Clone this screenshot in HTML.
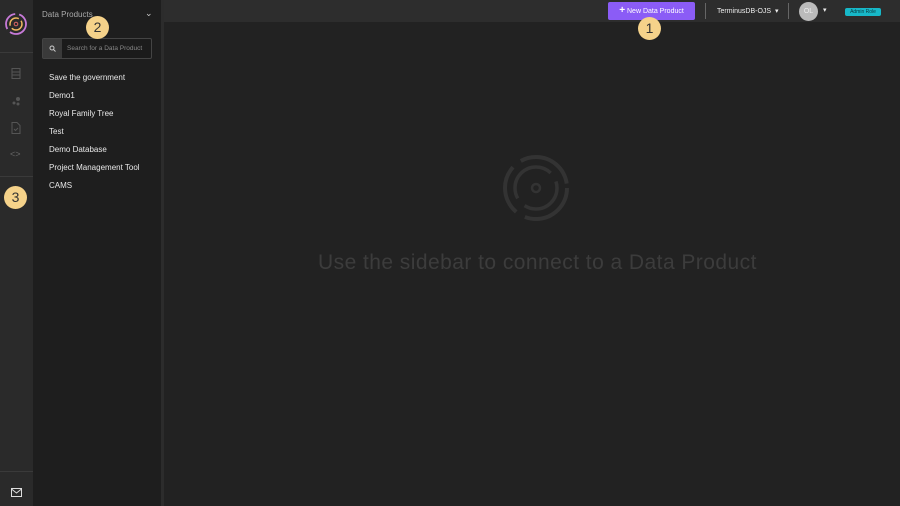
<!DOCTYPE html>
<html><head><style>
*{margin:0;padding:0;box-sizing:border-box}
body{width:900px;height:506px;background:#222;font-family:"Liberation Sans",sans-serif;position:relative;overflow:hidden}
.abs{position:absolute}
.badge{position:absolute;width:23px;height:23px;border-radius:50%;background:#f5d28a;color:#333;font-size:14px;text-align:center;line-height:23px}
.item{position:absolute;left:49px;color:#e8e8e8;font-size:8px}
</style></head><body>
<div class="abs" style="left:0;top:0;width:33px;height:506px;background:#2a2a2a"></div>
<div class="abs" style="left:0;top:52px;width:33px;height:1px;background:#3a3a3a"></div>
<div class="abs" style="left:0;top:176px;width:33px;height:1px;background:#3a3a3a"></div>
<div class="abs" style="left:0;top:471px;width:33px;height:1px;background:#3a3a3a"></div>
<svg class="abs" style="left:4px;top:12px" width="24" height="24" viewBox="0 0 24 24"><circle cx="12" cy="12" r="10" fill="none" stroke="#c77ad8" stroke-width="1.8" stroke-dasharray="22 4 20 4"/><circle cx="12" cy="12" r="6" fill="none" stroke="#f0b860" stroke-width="1.5" stroke-dasharray="14 3"/><circle cx="12" cy="12" r="1.8" fill="none" stroke="#d66" stroke-width="1"/></svg>
<svg class="abs" style="left:11px;top:68px" width="10" height="11"><rect x="1" y="0.5" width="8" height="10" fill="none" stroke="#555"/><path d="M1 4h8M1 7h8" stroke="#555"/></svg>
<svg class="abs" style="left:11px;top:96px" width="10" height="10"><circle cx="7" cy="3" r="2" fill="#555"/><circle cx="3" cy="7" r="1.5" fill="#555"/><circle cx="7" cy="8" r="1.5" fill="#555"/></svg>
<svg class="abs" style="left:11px;top:122px" width="10" height="12"><path d="M1 0.5h5l3 3v8H1z" fill="none" stroke="#555"/><path d="M3 7l1.5 1.5L7 6" stroke="#555" fill="none"/></svg>
<div class="abs" style="left:10px;top:149px;color:#666;font-size:9px">&lt;&gt;</div>
<svg class="abs" style="left:11px;top:488px" width="11" height="9"><rect x="0.5" y="0.5" width="10" height="8" fill="none" stroke="#ddd"/><path d="M0.5 1l5 4 5-4" stroke="#ddd" fill="none"/></svg>
<div class="abs" style="left:33px;top:0;width:128px;height:506px;background:#1e1e1e"></div>
<div class="abs" style="left:161px;top:0;width:3px;height:506px;background:#2c2c2c"></div>
<div class="abs" style="left:42px;top:10px;color:#aaa;font-size:8px">Data Products</div>
<div class="abs" style="left:145px;top:8px;color:#ccc;font-size:9px">⌄</div>
<div class="abs" style="left:42px;top:38px;width:110px;height:21px;border:1px solid #444;border-radius:2px;background:#1b1b1b"></div>
<div class="abs" style="left:43px;top:39px;width:19px;height:19px;background:#3a3a3a"></div>
<svg class="abs" style="left:49px;top:45px" width="7" height="7"><circle cx="3" cy="3" r="2" fill="none" stroke="#ccc"/><path d="M4.5 4.5l2 2" stroke="#ccc"/></svg>
<div class="abs" style="left:67px;top:45px;color:#888;font-size:6.5px">Search for a Data Product</div>
<div class="item" style="top:73px">Save the government</div>
<div class="item" style="top:91px">Demo1</div>
<div class="item" style="top:109px">Royal Family Tree</div>
<div class="item" style="top:127px">Test</div>
<div class="item" style="top:145px">Demo Database</div>
<div class="item" style="top:163px">Project Management Tool</div>
<div class="item" style="top:181px">CAMS</div>
<div class="abs" style="left:164px;top:0;width:736px;height:22px;background:#2d2d2d"></div>
<div class="abs" style="left:608px;top:2px;width:87px;height:18px;background:#8b5cf6;border-radius:2px;color:#fff;font-size:7px;line-height:18px;text-align:center"><b style="font-size:10px">+</b> New Data Product</div>
<div class="abs" style="left:705px;top:3px;width:1px;height:16px;background:#666"></div>
<div class="abs" style="left:717px;top:7px;color:#eee;font-size:7px">TerminusDB-OJS &nbsp;▾</div>
<div class="abs" style="left:788px;top:3px;width:1px;height:16px;background:#666"></div>
<div class="abs" style="left:799px;top:2px;width:19px;height:19px;border-radius:50%;background:#bbb;color:#eee;font-size:7px;line-height:19px;text-align:center">OL</div>
<div class="abs" style="left:823px;top:6px;color:#eee;font-size:7px">▾</div>
<div class="abs" style="left:845px;top:8px;width:36px;height:8px;background:#17b8c8;border-radius:2px;color:#0a3a40;font-size:5px;line-height:8px;text-align:center">Admin Role</div>
<svg class="abs" style="left:502px;top:154px" width="68" height="68" viewBox="0 0 68 68"><circle cx="34" cy="34" r="31" fill="none" stroke="#333" stroke-width="4" stroke-dasharray="60 10 50 10 60 5"/><circle cx="34" cy="34" r="21" fill="none" stroke="#333" stroke-width="3.5" stroke-dasharray="45 10 60 10"/><circle cx="34" cy="34" r="4" fill="none" stroke="#333" stroke-width="2.5"/></svg>
<div class="abs" style="left:318px;top:251px;color:#3c3c3c;font-size:21px;letter-spacing:0.45px">Use the sidebar to connect to a Data Product</div>
<div class="badge" style="left:638px;top:17px">1</div>
<div class="badge" style="left:86px;top:16px">2</div>
<div class="badge" style="left:4px;top:186px">3</div>
</body></html>
